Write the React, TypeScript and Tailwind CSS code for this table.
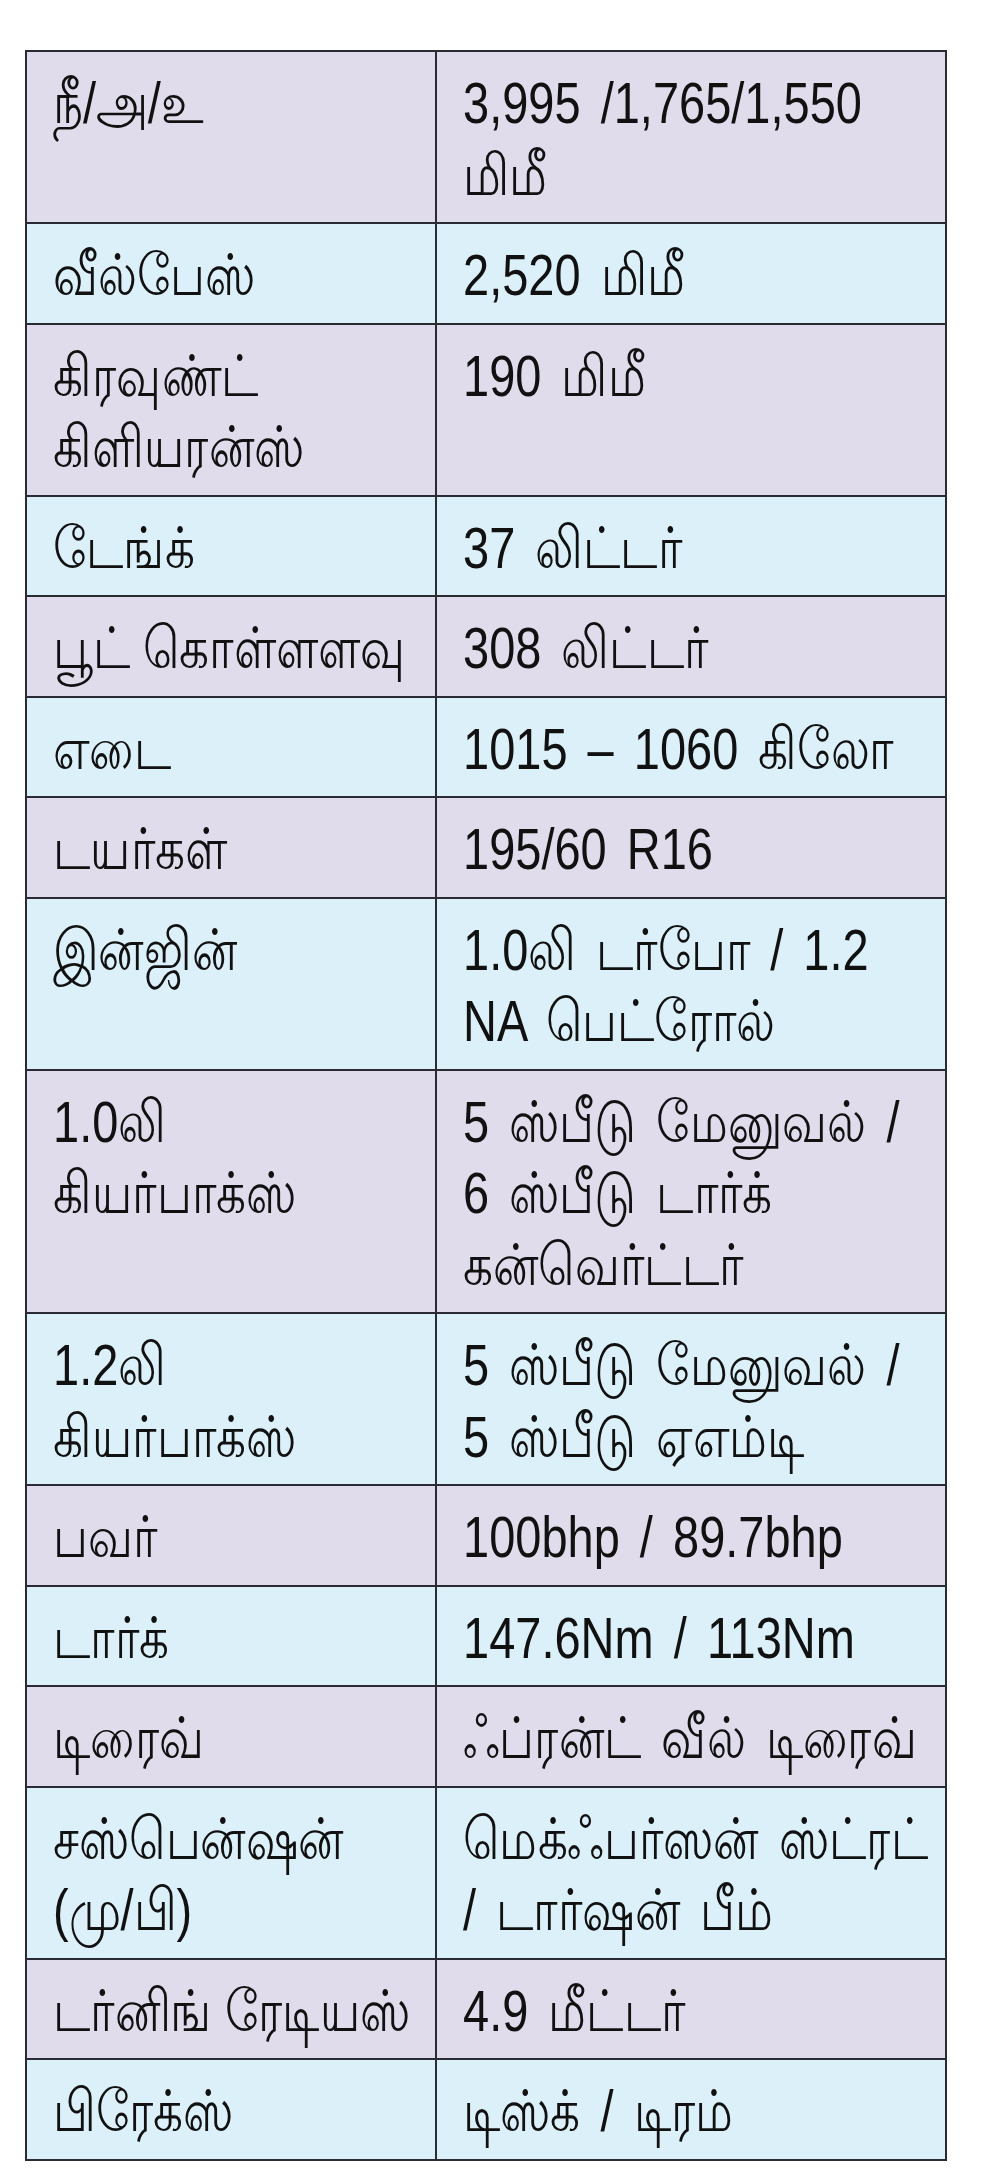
import React from 'react';

type Spec = {
  label: string[];
  value: string[];
};

const specs: Spec[] = [
  { label: ['நீ/அ/உ'], value: ['3,995 /1,765/1,550', 'மிமீ'] },
  { label: ['வீல்பேஸ்'], value: ['2,520 மிமீ'] },
  { label: ['கிரவுண்ட்', 'கிளியரன்ஸ்'], value: ['190 மிமீ'] },
  { label: ['டேங்க்'], value: ['37 லிட்டர்'] },
  { label: ['பூட் கொள்ளளவு'], value: ['308 லிட்டர்'] },
  { label: ['எடை'], value: ['1015 – 1060 கிலோ'] },
  { label: ['டயர்கள்'], value: ['195/60 R16'] },
  { label: ['இன்ஜின்'], value: ['1.0லி டர்போ / 1.2', 'NA பெட்ரோல்'] },
  { label: ['1.0லி', 'கியர்பாக்ஸ்'], value: ['5 ஸ்பீடு மேனுவல் /', '6 ஸ்பீடு டார்க்', 'கன்வெர்ட்டர்'] },
  { label: ['1.2லி', 'கியர்பாக்ஸ்'], value: ['5 ஸ்பீடு மேனுவல் /', '5 ஸ்பீடு ஏஎம்டி'] },
  { label: ['பவர்'], value: ['100bhp / 89.7bhp'] },
  { label: ['டார்க்'], value: ['147.6Nm / 113Nm'] },
  { label: ['டிரைவ்'], value: ['ஃப்ரன்ட் வீல் டிரைவ்'] },
  { label: ['சஸ்பென்ஷன்', '(மு/பி)'], value: ['மெக்ஃபர்ஸன் ஸ்ட்ரட்', '/ டார்ஷன் பீம்'] },
  { label: ['டர்னிங் ரேடியஸ்'], value: ['4.9 மீட்டர்'] },
  { label: ['பிரேக்ஸ்'], value: ['டிஸ்க் / டிரம்'] },
];

// the print face is a condensed grotesque, so squeeze each line sideways
const Lines: React.FC<{ lines: string[] }> = ({ lines }) => (
  <>
    {lines.map((line, i) => (
      <div key={i} className="whitespace-nowrap origin-left scale-x-[0.81]">
        {line}
      </div>
    ))}
  </>
);

const App: React.FC = () => {
  return (
    <div className="min-h-[2183px] w-[986px] overflow-hidden bg-white pt-[50px] pl-[25px]">
      <div
        className="w-[922px] border-2 border-b-0 border-[#2b2b33] text-[#111] text-[58px] leading-[71.5px]"
        style={{ fontFamily: "'Liberation Sans', sans-serif" }}
      >
        {specs.map((row, i) => (
          <div
            key={i}
            className={`grid grid-cols-[410px_1fr] border-b-2 border-[#2b2b33] ${
              i % 2 === 0 ? 'bg-[#e0dcec]' : 'bg-[#dcf0fa]'
            }`}
          >
            <div className="border-r-2 border-[#2b2b33] pl-[26px] pt-[15px] pb-[12px]">
              <Lines lines={row.label} />
            </div>
            <div className="pl-[26px] pt-[15px] pb-[12px] [word-spacing:0.15em]">
              <Lines lines={row.value} />
            </div>
          </div>
        ))}
      </div>
    </div>
  );
};

export default App;
